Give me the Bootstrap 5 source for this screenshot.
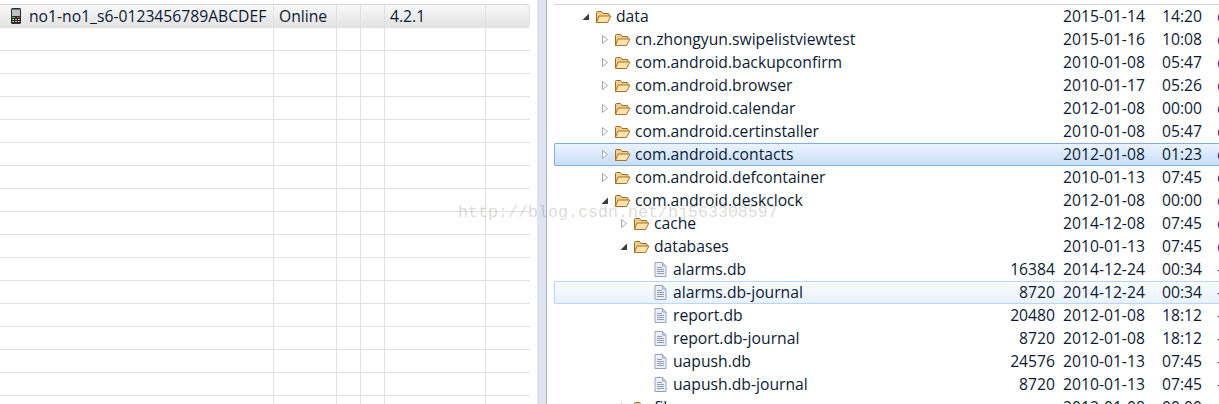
<!DOCTYPE html>
<html lang="en">
<head>
    <meta charset="UTF-8">
    <title>Devices and File Explorer</title>
    <link href="https://cdn.jsdelivr.net/npm/bootstrap@5.3.2/dist/css/bootstrap.min.css" rel="stylesheet">
    <style>
        html, body { height: 404px; overflow: hidden; background: #fff; }
        body { font-family: "Open Sans", "Noto Sans", sans-serif; font-size: 15.7px; color: #0c1a33; position: relative; }
        .device-pane { width: 530px; padding-top: 4px; flex: none; }
        .pane-gap { width: 7px; flex: none; }
        .sash { width: 10px; flex: none; background: #dde3f3; border-right: 1px solid #aab2c6; }
        .files-pane { flex: 1 1 auto; margin-left: 7px; padding-top: 4px; min-width: 0; }
        .dev-row { display: flex; height: 23px; border-top: 1px solid #e0e0e0; line-height: 20px; }
        .dev-row:first-child { border-top-color: #d4d4d4; }
        .dev-row.picked { background: linear-gradient(#f8f8f8, #e3e3e3); border-radius: 0 4px 4px 0; box-shadow: inset -1px 0 #e0e0e0; }
        .dev-cell { border-right: 1px solid #e0e0e0; padding-left: 5px; white-space: nowrap; overflow: hidden; display: flex; align-items: center; }
        .dev-cell:last-child { border-right: 0; flex: 1; }
        .w-name { width: 274px; padding-left: 11px; }
        .w-state { width: 63px; }
        .w-a, .w-b { width: 24px; }
        .w-ver { width: 101px; }
        .file-top { height: 1px; background: #d8d8d8; }
        .tree-row { display: flex; align-items: center; height: 23px; white-space: nowrap; border: 1px solid transparent; border-right: 0; border-radius: 2px 0 0 2px; }
        .tree-row.sel { border-color: #84acdd; background: linear-gradient(#eaf3fe, #c8dffa); }
        .tree-row.hov { border-color: #b8d6fb; background: linear-gradient(#fafcff, #e9f2fd); }
        .ind-0 { padding-left: 26px; }
        .ind-1 { padding-left: 45px; }
        .ind-2 { padding-left: 64px; }
        .ind-3 { padding-left: 83px; }
        .tw { width: 9px; height: 9px; flex: none; margin-right: 5px; }
        .fi { width: 17px; height: 14px; flex: none; margin-right: 4px; }
        .doc { width: 13px; height: 15px; flex: none; margin-left: 16px; margin-right: 6px; }
        .t-name { flex: 1; min-width: 0; }
        .t-size { width: 60px; text-align: right; flex: none; }
        .t-date { width: 107px; padding-left: 8px; flex: none; }
        .t-time { width: 55px; flex: none; }
        .t-perm { color: #12348f; }
        .t-perm-wrap { width: 2px; flex: none; overflow: hidden; }
        .stamp { position: absolute; left: 458px; top: 203px; font-family: "Liberation Mono", monospace; font-size: 16.67px; line-height: 20px; color: rgba(120, 120, 110, .28); white-space: nowrap; pointer-events: none; }
    </style>
</head>
<body>
    <svg width="0" height="0" class="position-absolute">
        <symbol id="folder" viewBox="0 0 17 14">
            <path d="M1.500 12.500V2.500q0-1 1-1h4l1.500 2h5q1 0 1 1v1.500" fill="#f0d08c" stroke="#a06a26"/>
            <path d="M1.500 12.500L4 6h12l-3.500 6.500z" fill="#fae3ac" stroke="#ad7226"/>
        </symbol>
        <symbol id="open" viewBox="0 0 9 9">
            <path d="M8 1.500V8H1.500z" fill="#3c3c3c"/>
        </symbol>
        <symbol id="closed" viewBox="0 0 9 9">
            <path d="M2.500 .5v8l5-4z" fill="#fff" stroke="#a6a6a6"/>
        </symbol>
        <symbol id="dbfile" viewBox="0 0 13 15">
            <path d="M1 .5h7.500l3.500 3.500v10.500h-11z" fill="#eceff8" stroke="#96a2bc"/>
            <path d="M8.500 .5v3.500h3.500" fill="#cfd6e8" stroke="#96a2bc"/>
            <path d="M3 5.500h5M3 7.500h7M3 9.500h7M3 11.500h7" stroke="#8f9cba"/>
        </symbol>
        <symbol id="phone" viewBox="0 0 10 16">
            <rect x="0" y="0" width="10" height="16" rx="1.500" fill="#2c2c2c"/>
            <rect x="1" y="1.500" width="8" height="6.500" fill="#b9c1c6"/>
            <path d="M1 9h3v1H1z" fill="#3fbf4a"/>
            <path d="M6 9h3v1H6z" fill="#d8404a"/>
            <path d="M1.500 11h1.500v1H1.500zM4.300 11h1.500v1H4.300zM7 11h1.500v1H7zM1.500 13h1.500v1H1.500zM4.300 13h1.500v1H4.300zM7 13h1.500v1H7z" fill="#ddd"/>
        </symbol>
    </svg>

    <div class="d-flex">
        <div class="device-pane" id="devices">
            <div class="dev-row picked">
                <div class="dev-cell w-name"><svg width="10" height="16" class="flex-shrink-0 me-2"><use href="#phone"/></svg>no1-no1_s6-0123456789ABCDEF</div>
                <div class="dev-cell w-state">Online</div>
                <div class="dev-cell w-a"></div>
                <div class="dev-cell w-b"></div>
                <div class="dev-cell w-ver">4.2.1</div>
                <div class="dev-cell"></div>
            </div>
        </div>
        <div class="pane-gap"></div>
        <div class="sash"></div>
        <div class="files-pane">
            <div class="file-top"></div>
            <div id="tree"></div>
        </div>
    </div>
    <div class="stamp">http://blog.csdn.net/hj563308597</div>

    <script>
        // lignes vides du tableau de gauche
        const devices = document.getElementById('devices');
        for (let i = 0; i < 17; i++) {
            devices.insertAdjacentHTML('beforeend', '<div class="dev-row"><div class="dev-cell w-name"></div><div class="dev-cell w-state"></div><div class="dev-cell w-a"></div><div class="dev-cell w-b"></div><div class="dev-cell w-ver"></div><div class="dev-cell"></div></div>');
        }

        // niveau, type (o ouvert, c fermé, f fichier), nom, taille, date, heure, droits, état
        const files = [
            [0, 'o', 'data', '', '2015-01-14', '14:20', 'd'],
            [1, 'c', 'cn.zhongyun.swipelistviewtest', '', '2015-01-16', '10:08', 'd'],
            [1, 'c', 'com.android.backupconfirm', '', '2010-01-08', '05:47', 'd'],
            [1, 'c', 'com.android.browser', '', '2010-01-17', '05:26', 'd'],
            [1, 'c', 'com.android.calendar', '', '2012-01-08', '00:00', 'd'],
            [1, 'c', 'com.android.certinstaller', '', '2010-01-08', '05:47', 'd'],
            [1, 'c', 'com.android.contacts', '', '2012-01-08', '01:23', 'd', 'sel'],
            [1, 'c', 'com.android.defcontainer', '', '2010-01-13', '07:45', 'd'],
            [1, 'o', 'com.android.deskclock', '', '2012-01-08', '00:00', 'd'],
            [2, 'c', 'cache', '', '2014-12-08', '07:45', 'd'],
            [2, 'o', 'databases', '', '2010-01-13', '07:45', 'd'],
            [3, 'f', 'alarms.db', '16384', '2014-12-24', '00:34', '-'],
            [3, 'f', 'alarms.db-journal', '8720', '2014-12-24', '00:34', '-', 'hov'],
            [3, 'f', 'report.db', '20480', '2012-01-08', '18:12', '-'],
            [3, 'f', 'report.db-journal', '8720', '2012-01-08', '18:12', '-'],
            [3, 'f', 'uapush.db', '24576', '2010-01-13', '07:45', '-'],
            [3, 'f', 'uapush.db-journal', '8720', '2010-01-13', '07:45', '-'],
            [2, 'c', 'files', '', '2012-01-08', '00:00', 'd']
        ];
        const tree = document.getElementById('tree');
        files.forEach(f => {
            let icon;
            if (f[1] === 'f') {
                icon = '<svg class="doc"><use href="#dbfile"/></svg>';
            } else {
                icon = '<svg class="tw"><use href="#' + (f[1] === 'o' ? 'open' : 'closed') + '"/></svg><svg class="fi"><use href="#folder"/></svg>';
            }
            tree.insertAdjacentHTML('beforeend',
                '<div class="tree-row ind-' + f[0] + ' ' + (f[7] || '') + '">' + icon +
                '<span class="t-name">' + f[2] + '</span>' +
                '<span class="t-size">' + f[3] + '</span>' +
                '<span class="t-date">' + f[4] + '</span>' +
                '<span class="t-time">' + f[5] + '</span>' +
                '<span class="t-perm-wrap"><span class="t-perm">' + f[6] + '</span></span></div>');
        });
    </script>
    <script src="https://cdn.jsdelivr.net/npm/bootstrap@5.3.2/dist/js/bootstrap.bundle.min.js"></script>
</body>
</html>
